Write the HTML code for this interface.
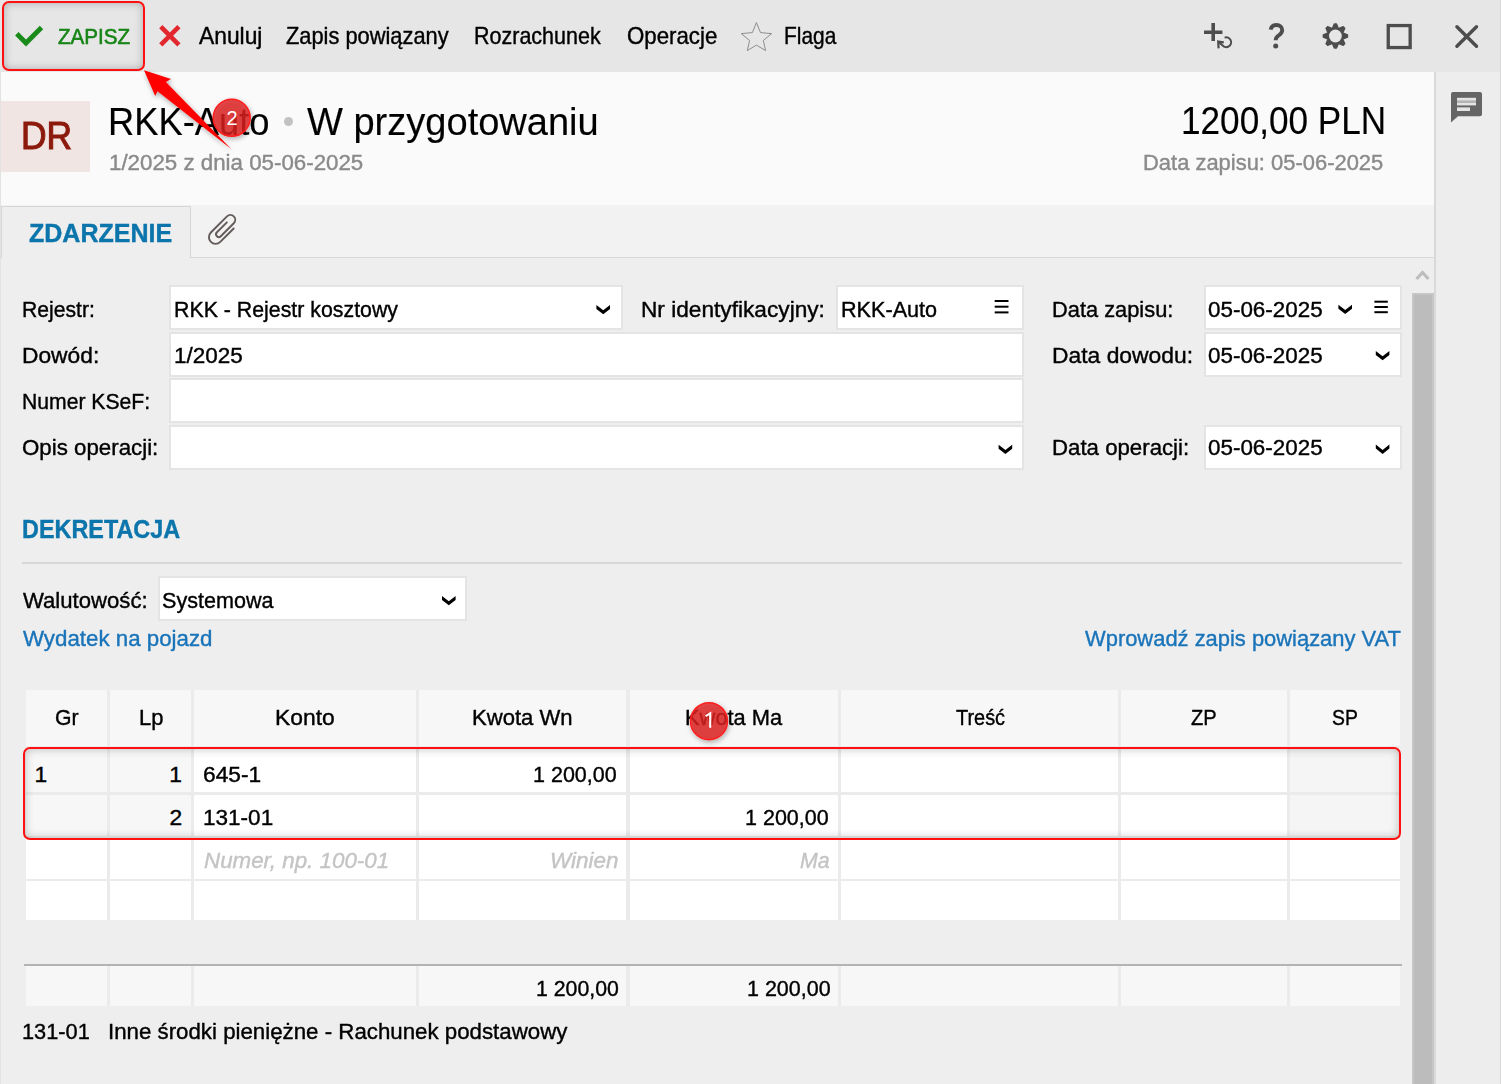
<!DOCTYPE html>
<html><head><meta charset="utf-8"><style>
html,body{margin:0;padding:0;width:1501px;height:1084px;overflow:hidden;background:#eeeeee;}
.b{position:absolute;}
.t{position:absolute;-webkit-text-stroke:0.4px currentColor;font-family:"Liberation Sans",sans-serif;line-height:1;white-space:pre;transform-origin:0 0;}
svg{position:absolute;left:0;top:0;}
</style></head><body>
<div class="b" style="left:0px;top:0px;width:1501px;height:72px;background:#e6e6e6;"></div><div class="b" style="left:0px;top:72px;width:1434px;height:133px;background:#fafafa;"></div><div class="b" style="left:1434px;top:72px;width:67px;height:1012px;background:#ededed;border-left:2px solid #d9d9d9;box-sizing:border-box;"></div><div class="b" style="left:0px;top:205px;width:1434px;height:53px;background:#f2f2f2;border-bottom:1px solid #d8d8d8;box-sizing:border-box;"></div><div class="b" style="left:1px;top:206px;width:190px;height:52px;background:#eeeeee;border:1px solid #d6d6d6;border-bottom:none;box-sizing:border-box;"></div><div class="b" style="left:0px;top:72px;width:1px;height:1012px;background:#e2e2e2;"></div><div class="b" style="left:1500px;top:0px;width:1px;height:1084px;background:#d9d9d9;"></div><div class="b" style="left:1px;top:101px;width:89px;height:71px;background:#f0e5e3;"></div><div class="b" style="left:284px;top:117px;width:9.4px;height:9.4px;border-radius:50%;background:#c2c2c2"></div><div class="b" style="left:169px;top:285px;width:454px;height:45px;background:#fff;border:2px solid #e4e4e4;box-sizing:border-box;"></div><div class="b" style="left:836px;top:285px;width:188px;height:45px;background:#fff;border:2px solid #e4e4e4;box-sizing:border-box;"></div><div class="b" style="left:1204px;top:285px;width:198px;height:45px;background:#fff;border:2px solid #e4e4e4;box-sizing:border-box;"></div><div class="b" style="left:169px;top:332px;width:855px;height:45px;background:#fff;border:2px solid #e4e4e4;box-sizing:border-box;"></div><div class="b" style="left:1204px;top:332px;width:198px;height:45px;background:#fff;border:2px solid #e4e4e4;box-sizing:border-box;"></div><div class="b" style="left:169px;top:378px;width:855px;height:45px;background:#fff;border:2px solid #e4e4e4;box-sizing:border-box;"></div><div class="b" style="left:169px;top:425px;width:855px;height:45px;background:#fff;border:2px solid #e4e4e4;box-sizing:border-box;"></div><div class="b" style="left:1204px;top:425px;width:198px;height:45px;background:#fff;border:2px solid #e4e4e4;box-sizing:border-box;"></div><div class="b" style="left:22px;top:562px;width:1380px;height:2px;background:#d7d7d7;"></div><div class="b" style="left:158px;top:576px;width:309px;height:45px;background:#fff;border:2px solid #e4e4e4;box-sizing:border-box;"></div><div class="b" style="left:26px;top:690px;width:1374px;height:230px;background:#ebebeb;"></div><div class="b" style="left:26px;top:690px;width:81px;height:56px;background:#f7f7f7;"></div><div class="b" style="left:110px;top:690px;width:81px;height:56px;background:#f7f7f7;"></div><div class="b" style="left:194px;top:690px;width:222px;height:56px;background:#f7f7f7;"></div><div class="b" style="left:419px;top:690px;width:207px;height:56px;background:#f7f7f7;"></div><div class="b" style="left:630px;top:690px;width:208px;height:56px;background:#f7f7f7;"></div><div class="b" style="left:841px;top:690px;width:277px;height:56px;background:#f7f7f7;"></div><div class="b" style="left:1121px;top:690px;width:166px;height:56px;background:#f7f7f7;"></div><div class="b" style="left:1290px;top:690px;width:110px;height:56px;background:#f7f7f7;"></div><div class="b" style="left:26px;top:748px;width:81px;height:44px;background:#f7f7f7;"></div><div class="b" style="left:110px;top:748px;width:81px;height:44px;background:#f7f7f7;"></div><div class="b" style="left:194px;top:748px;width:222px;height:44px;background:#ffffff;"></div><div class="b" style="left:419px;top:748px;width:207px;height:44px;background:#ffffff;"></div><div class="b" style="left:630px;top:748px;width:208px;height:44px;background:#ffffff;"></div><div class="b" style="left:841px;top:748px;width:277px;height:44px;background:#ffffff;"></div><div class="b" style="left:1121px;top:748px;width:166px;height:44px;background:#ffffff;"></div><div class="b" style="left:1290px;top:748px;width:110px;height:44px;background:#f5f5f5;"></div><div class="b" style="left:26px;top:795px;width:81px;height:41px;background:#f7f7f7;"></div><div class="b" style="left:110px;top:795px;width:81px;height:41px;background:#f7f7f7;"></div><div class="b" style="left:194px;top:795px;width:222px;height:41px;background:#ffffff;"></div><div class="b" style="left:419px;top:795px;width:207px;height:41px;background:#ffffff;"></div><div class="b" style="left:630px;top:795px;width:208px;height:41px;background:#ffffff;"></div><div class="b" style="left:841px;top:795px;width:277px;height:41px;background:#ffffff;"></div><div class="b" style="left:1121px;top:795px;width:166px;height:41px;background:#ffffff;"></div><div class="b" style="left:1290px;top:795px;width:110px;height:41px;background:#f5f5f5;"></div><div class="b" style="left:26px;top:838px;width:81px;height:41px;background:#ffffff;"></div><div class="b" style="left:110px;top:838px;width:81px;height:41px;background:#ffffff;"></div><div class="b" style="left:194px;top:838px;width:222px;height:41px;background:#ffffff;"></div><div class="b" style="left:419px;top:838px;width:207px;height:41px;background:#ffffff;"></div><div class="b" style="left:630px;top:838px;width:208px;height:41px;background:#ffffff;"></div><div class="b" style="left:841px;top:838px;width:277px;height:41px;background:#ffffff;"></div><div class="b" style="left:1121px;top:838px;width:166px;height:41px;background:#ffffff;"></div><div class="b" style="left:1290px;top:838px;width:110px;height:41px;background:#ffffff;"></div><div class="b" style="left:26px;top:881px;width:81px;height:39px;background:#ffffff;"></div><div class="b" style="left:110px;top:881px;width:81px;height:39px;background:#ffffff;"></div><div class="b" style="left:194px;top:881px;width:222px;height:39px;background:#ffffff;"></div><div class="b" style="left:419px;top:881px;width:207px;height:39px;background:#ffffff;"></div><div class="b" style="left:630px;top:881px;width:208px;height:39px;background:#ffffff;"></div><div class="b" style="left:841px;top:881px;width:277px;height:39px;background:#ffffff;"></div><div class="b" style="left:1121px;top:881px;width:166px;height:39px;background:#ffffff;"></div><div class="b" style="left:1290px;top:881px;width:110px;height:39px;background:#ffffff;"></div><div class="b" style="left:24px;top:964px;width:1378px;height:2px;background:#b3b3b3;"></div><div class="b" style="left:26px;top:966px;width:1374px;height:40px;background:#ebebeb;"></div><div class="b" style="left:26px;top:966px;width:81px;height:40px;background:#f7f7f7;"></div><div class="b" style="left:110px;top:966px;width:81px;height:40px;background:#f7f7f7;"></div><div class="b" style="left:194px;top:966px;width:222px;height:40px;background:#f7f7f7;"></div><div class="b" style="left:419px;top:966px;width:207px;height:40px;background:#f7f7f7;"></div><div class="b" style="left:630px;top:966px;width:208px;height:40px;background:#f7f7f7;"></div><div class="b" style="left:841px;top:966px;width:277px;height:40px;background:#f7f7f7;"></div><div class="b" style="left:1121px;top:966px;width:166px;height:40px;background:#f7f7f7;"></div><div class="b" style="left:1290px;top:966px;width:110px;height:40px;background:#f7f7f7;"></div><div class="b" style="left:1412px;top:293px;width:22px;height:791px;background:#bcbcbc;border:2px solid #c6c6c6;border-bottom:none;box-sizing:border-box;"></div>
<div class="t" style="left:58.30px;top:26.27px;font-size:22.6px;color:#178517;font-weight:400;font-style:normal;transform:scaleX(0.9131);-webkit-text-stroke:0.6px #178517;">ZAPISZ</div>
<div class="t" style="left:198.70px;top:25.36px;font-size:23.2px;color:#000;font-weight:400;font-style:normal;transform:scaleX(0.9841);">Anuluj</div>
<div class="t" style="left:286.00px;top:25.36px;font-size:23.2px;color:#000;font-weight:400;font-style:normal;transform:scaleX(0.9416);">Zapis powiązany</div>
<div class="t" style="left:474.27px;top:25.36px;font-size:23.2px;color:#000;font-weight:400;font-style:normal;transform:scaleX(0.9270);">Rozrachunek</div>
<div class="t" style="left:627.04px;top:25.36px;font-size:23.2px;color:#000;font-weight:400;font-style:normal;transform:scaleX(0.9600);">Operacje</div>
<div class="t" style="left:783.60px;top:25.36px;font-size:23.2px;color:#000;font-weight:400;font-style:normal;transform:scaleX(0.9018);">Flaga</div>
<div class="t" style="left:108.22px;top:101.81px;font-size:39.2px;color:#000;font-weight:400;font-style:normal;transform:scaleX(0.9270);-webkit-text-stroke:0.15px #000;">RKK-Auto</div>
<div class="t" style="left:307.00px;top:101.81px;font-size:39.2px;color:#000;font-weight:400;font-style:normal;transform:scaleX(0.9706);-webkit-text-stroke:0.15px #000;">W przygotowaniu</div>
<div class="t" style="left:109.28px;top:151.74px;font-size:21.8px;color:#8a8a8a;font-weight:400;font-style:normal;transform:scaleX(1.0234);">1/2025 z dnia 05-06-2025</div>
<div class="t" style="left:1180.91px;top:101.41px;font-size:39.2px;color:#000;font-weight:400;font-style:normal;transform:scaleX(0.8968);-webkit-text-stroke:0.15px #000;">1200,00 PLN</div>
<div class="t" style="left:1143.49px;top:151.64px;font-size:21.8px;color:#8a8a8a;font-weight:400;font-style:normal;transform:scaleX(1.0064);">Data zapisu: 05-06-2025</div>
<div class="t" style="left:21.25px;top:116.83px;font-size:38.7px;color:#8c1a0c;font-weight:400;font-style:normal;transform:scaleX(0.9165);-webkit-text-stroke:1.1px #8c1a0c;">DR</div>
<div class="t" style="left:29.40px;top:221.47px;font-size:25.9px;color:#0c75ab;font-weight:700;font-style:normal;transform:scaleX(0.9670);">ZDARZENIE</div>
<div class="t" style="left:21.57px;top:297.50px;font-size:22.8px;color:#000;font-weight:400;font-style:normal;transform:scaleX(0.9277);">Rejestr:</div>
<div class="t" style="left:21.50px;top:343.60px;font-size:22.8px;color:#000;font-weight:400;font-style:normal;transform:scaleX(0.9992);">Dowód:</div>
<div class="t" style="left:21.57px;top:390.30px;font-size:22.8px;color:#000;font-weight:400;font-style:normal;transform:scaleX(0.9282);">Numer KSeF:</div>
<div class="t" style="left:21.52px;top:436.00px;font-size:22.8px;color:#000;font-weight:400;font-style:normal;transform:scaleX(0.9778);">Opis operacji:</div>
<div class="t" style="left:173.86px;top:297.50px;font-size:22.8px;color:#000;font-weight:400;font-style:normal;transform:scaleX(0.9355);">RKK - Rejestr kosztowy</div>
<div class="t" style="left:173.51px;top:343.70px;font-size:22.8px;color:#000;font-weight:400;font-style:normal;transform:scaleX(0.9875);">1/2025</div>
<div class="t" style="left:641.01px;top:297.50px;font-size:22.8px;color:#000;font-weight:400;font-style:normal;transform:scaleX(0.9943);">Nr identyfikacyjny:</div>
<div class="t" style="left:841.05px;top:297.50px;font-size:22.8px;color:#000;font-weight:400;font-style:normal;transform:scaleX(0.9480);">RKK-Auto</div>
<div class="t" style="left:1051.84px;top:297.50px;font-size:22.8px;color:#000;font-weight:400;font-style:normal;transform:scaleX(0.9575);">Data zapisu:</div>
<div class="t" style="left:1208.00px;top:297.50px;font-size:22.8px;color:#000;font-weight:400;font-style:normal;transform:scaleX(0.9833);">05-06-2025</div>
<div class="t" style="left:1051.80px;top:343.60px;font-size:22.8px;color:#000;font-weight:400;font-style:normal;transform:scaleX(1.0026);">Data dowodu:</div>
<div class="t" style="left:1208.00px;top:343.60px;font-size:22.8px;color:#000;font-weight:400;font-style:normal;transform:scaleX(0.9833);">05-06-2025</div>
<div class="t" style="left:1051.92px;top:436.00px;font-size:22.8px;color:#000;font-weight:400;font-style:normal;transform:scaleX(0.9753);">Data operacji:</div>
<div class="t" style="left:1208.00px;top:436.00px;font-size:22.8px;color:#000;font-weight:400;font-style:normal;transform:scaleX(0.9833);">05-06-2025</div>
<div class="t" style="left:21.60px;top:516.67px;font-size:25.9px;color:#0c75ab;font-weight:700;font-style:normal;transform:scaleX(0.9035);">DEKRETACJA</div>
<div class="t" style="left:22.50px;top:588.70px;font-size:22.8px;color:#000;font-weight:400;font-style:normal;transform:scaleX(0.9705);">Walutowość:</div>
<div class="t" style="left:161.85px;top:588.70px;font-size:22.8px;color:#000;font-weight:400;font-style:normal;transform:scaleX(0.9467);">Systemowa</div>
<div class="t" style="left:22.50px;top:627.40px;font-size:22.8px;color:#1a74b9;font-weight:400;font-style:normal;transform:scaleX(0.9782);">Wydatek na pojazd</div>
<div class="t" style="left:1085.00px;top:627.40px;font-size:22.8px;color:#1a74b9;font-weight:400;font-style:normal;transform:scaleX(0.9615);">Wprowadź zapis powiązany VAT</div>
<div class="t" style="left:54.57px;top:706.30px;font-size:22.8px;color:#000;font-weight:400;font-style:normal;transform:scaleX(0.9300);">Gr</div>
<div class="t" style="left:138.74px;top:706.30px;font-size:22.8px;color:#000;font-weight:400;font-style:normal;transform:scaleX(0.9629);">Lp</div>
<div class="t" style="left:275.00px;top:706.30px;font-size:22.8px;color:#000;font-weight:400;font-style:normal;transform:scaleX(1.0018);">Konto</div>
<div class="t" style="left:472.23px;top:706.30px;font-size:22.8px;color:#000;font-weight:400;font-style:normal;transform:scaleX(0.9686);">Kwota Wn</div>
<div class="t" style="left:685.04px;top:706.30px;font-size:22.8px;color:#000;font-weight:400;font-style:normal;transform:scaleX(0.9594);">Kwota Ma</div>
<div class="t" style="left:955.50px;top:706.30px;font-size:22.8px;color:#000;font-weight:400;font-style:normal;transform:scaleX(0.8736);">Treść</div>
<div class="t" style="left:1191.00px;top:706.30px;font-size:22.8px;color:#000;font-weight:400;font-style:normal;transform:scaleX(0.8809);">ZP</div>
<div class="t" style="left:1332.15px;top:706.30px;font-size:22.8px;color:#000;font-weight:400;font-style:normal;transform:scaleX(0.8509);">SP</div>
<div class="t" style="left:34.40px;top:762.70px;font-size:22.8px;color:#000;font-weight:400;font-style:normal;transform:scaleX(1.0000);">1</div>
<div class="t" style="left:169.30px;top:762.70px;font-size:22.8px;color:#000;font-weight:400;font-style:normal;transform:scaleX(1.0000);">1</div>
<div class="t" style="left:202.50px;top:762.70px;font-size:22.8px;color:#000;font-weight:400;font-style:normal;transform:scaleX(0.9978);">645-1</div>
<div class="t" style="left:533.36px;top:762.70px;font-size:22.8px;color:#000;font-weight:400;font-style:normal;transform:scaleX(0.9430);">1 200,00</div>
<div class="t" style="left:169.50px;top:805.70px;font-size:22.8px;color:#000;font-weight:400;font-style:normal;transform:scaleX(1.0000);">2</div>
<div class="t" style="left:202.51px;top:805.70px;font-size:22.8px;color:#000;font-weight:400;font-style:normal;transform:scaleX(0.9884);">131-01</div>
<div class="t" style="left:744.56px;top:805.70px;font-size:22.8px;color:#000;font-weight:400;font-style:normal;transform:scaleX(0.9430);">1 200,00</div>
<div class="t" style="left:203.50px;top:849.00px;font-size:22.8px;color:#c4c4c4;font-weight:400;font-style:italic;transform:scaleX(0.9805);">Numer, np. 100-01</div>
<div class="t" style="left:550.01px;top:849.00px;font-size:22.8px;color:#c4c4c4;font-weight:400;font-style:italic;transform:scaleX(0.9852);">Winien</div>
<div class="t" style="left:800.00px;top:849.00px;font-size:22.8px;color:#c4c4c4;font-weight:400;font-style:italic;transform:scaleX(0.9358);">Ma</div>
<div class="t" style="left:535.57px;top:976.80px;font-size:22.8px;color:#000;font-weight:400;font-style:normal;transform:scaleX(0.9338);">1 200,00</div>
<div class="t" style="left:746.66px;top:976.80px;font-size:22.8px;color:#000;font-weight:400;font-style:normal;transform:scaleX(0.9419);">1 200,00</div>
<div class="t" style="left:22.34px;top:1020.30px;font-size:22.8px;color:#000;font-weight:400;font-style:normal;transform:scaleX(0.9552);">131-01</div>
<div class="t" style="left:108.05px;top:1020.30px;font-size:22.8px;color:#000;font-weight:400;font-style:normal;transform:scaleX(0.9771);">Inne środki pieniężne - Rachunek podstawowy</div>
<div class="b" style="left:1.5px;top:1px;width:143px;height:69.5px;border:2.5px solid #ff1010;border-radius:7px;box-sizing:border-box;box-shadow:inset 0 0 9px rgba(0,0,0,0.26)"></div><div class="b" style="left:22.5px;top:746.8px;width:1378.5px;height:92.8px;border:2.8px solid #ff1010;border-radius:7px;box-sizing:border-box;box-shadow:inset 0 0 10px rgba(0,0,0,0.24)"></div>
<svg width="1501" height="1084" viewBox="0 0 1501 1084">
<defs>
<filter id="sh" x="-50%" y="-50%" width="200%" height="200%"><feGaussianBlur in="SourceAlpha" stdDeviation="2.5"/><feOffset dx="1" dy="2"/><feComponentTransfer><feFuncA type="linear" slope="0.35"/></feComponentTransfer><feMerge><feMergeNode/><feMergeNode in="SourceGraphic"/></feMerge></filter>
</defs>
<!-- check -->
<polyline points="16.8,33.8 26,43 41.5,27.5" fill="none" stroke="#1a8a1a" stroke-width="4.8"/>
<!-- red x -->
<path d="M160.8,26.6 L178.9,44.8 M178.9,26.6 L160.8,44.8" stroke="#e2282e" stroke-width="4.6"/>
<!-- star -->
<polygon points="756.4,22.5 760.5,32.6 771.6,33.6 763.3,40.5 765.6,50.6 756.4,45.1 747.3,50.6 749.6,40.5 741.3,33.6 752.4,32.6" fill="none" stroke="#8e8e8e" stroke-width="1"/>
<!-- plus refresh -->
<rect x="1211.4" y="23" width="3.6" height="18" fill="#4d4d4d"/>
<rect x="1204" y="30.5" width="18.4" height="3.5" fill="#4d4d4d"/>
<path d="M1224.6,37.6 A4.9,4.9 0 1 1 1222.3,45.2 L1219,42.2" fill="none" stroke="#4d4d4d" stroke-width="2"/>
<polyline points="1223.8,42.3 1218.2,41.6 1218.6,48.4" fill="none" stroke="#4d4d4d" stroke-width="2.2"/>
<!-- ? -->
<path d="M1270.6,29.6 C1271.3,26.4 1273.6,25 1276.4,25 C1279.8,25 1282.2,27.2 1282.2,30.2 C1282.2,33.4 1279.8,34.6 1277.8,36.1 C1276.2,37.3 1275.6,38.2 1275.6,40.2" fill="none" stroke="#4d4d4d" stroke-width="3.9"/>
<circle cx="1275.7" cy="46" r="2.5" fill="#4d4d4d"/>
<!-- gear -->
<polygon points="1332.38,28.70 1334.35,23.95 1336.45,23.95 1338.42,28.70 1343.18,26.73 1344.67,28.22 1342.70,32.98 1347.45,34.95 1347.45,37.05 1342.70,39.02 1344.67,43.78 1343.18,45.27 1338.42,43.30 1336.45,48.05 1334.35,48.05 1332.38,43.30 1327.62,45.27 1326.13,43.78 1328.10,39.02 1323.35,37.05 1323.35,34.95 1328.10,32.98 1326.13,28.22 1327.62,26.73" fill="#4d4d4d" stroke="#4d4d4d" stroke-width="1.5" stroke-linejoin="round"/>
<circle cx="1335.4" cy="36.0" r="6.4" fill="#e6e6e6"/>
<!-- square -->
<rect x="1388.25" y="25.55" width="21.9" height="22" fill="none" stroke="#4d4d4d" stroke-width="3.3"/>
<!-- close x -->
<path d="M1456.9,26.7 L1476.5,46.3 M1476.5,26.7 L1456.9,46.3" stroke="#4d4d4d" stroke-width="3.4" stroke-linecap="round"/>
<!-- comment icon -->
<path d="M1453,92 H1480 a2,2 0 0 1 2,2 V114.3 a2,2 0 0 1 -2,2 H1458 L1451,122.6 V94 a2,2 0 0 1 2,-2 Z" fill="#656565"/>
<rect x="1457" y="97.8" width="19" height="7.6" fill="#e4e4e4"/>
<rect x="1457" y="100.4" width="19" height="2.6" fill="#b4b4b4"/>
<rect x="1457" y="107.4" width="13" height="3.6" fill="#e4e4e4"/>
<!-- paperclip -->
<g transform="translate(222,229.1) scale(1.08) translate(-221.9,-228.3) rotate(-45)"><path d="M3.5,325.6 L-14.05,325.6 A6.15,6.15 0 0 1 -14.05,313.3 L7.05,313.3 A4.45,4.45 0 0 1 7.05,322.2 L-9.95,322.2 A2.55,2.55 0 0 1 -9.95,317.1 L3.1,317.1" fill="none" stroke="#645c5a" stroke-width="1.8" stroke-linecap="round"/></g>
<!-- chevrons -->
<polygon points="596.4,305 603.20,310.30 610.00,305 610.00,309.0 603.20,314.30 596.4,309.0" fill="#000"/>
<polygon points="1338.4,304.8 1345.20,310.10 1352.00,304.8 1352.00,308.8 1345.20,314.10 1338.4,308.8" fill="#000"/>
<polygon points="1375.8,351 1382.60,356.30 1389.40,351 1389.40,355.0 1382.60,360.30 1375.8,355.0" fill="#000"/>
<polygon points="998.6,444.8 1005.40,450.10 1012.20,444.8 1012.20,448.8 1005.40,454.10 998.6,448.8" fill="#000"/>
<polygon points="1375.8,444.6 1382.60,449.90 1389.40,444.6 1389.40,448.6 1382.60,453.90 1375.8,448.6" fill="#000"/>
<polygon points="442,596 448.80,601.30 455.60,596 455.60,600.0 448.80,605.30 442,600.0" fill="#000"/>
<!-- hamburger -->
<g fill="#000">
<rect x="994.7" y="300" width="13.8" height="2"/><rect x="994.7" y="305.7" width="13.8" height="2"/><rect x="994.7" y="311.4" width="13.8" height="2"/>
<rect x="1374.4" y="300.7" width="13.4" height="2"/><rect x="1374.4" y="306" width="13.4" height="2"/><rect x="1374.4" y="311.2" width="13.4" height="2"/>
</g>
<!-- scroll up -->
<polyline points="1416.5,279 1422.5,272.5 1428.5,279" fill="none" stroke="#bdbdbd" stroke-width="3.2"/>
<!-- arrow -->
<polygon points="144,70.3 171,79.1 165.9,81.9 231.2,149.1 157.5,91.2 155.2,95.9" fill="#ff0000" filter="url(#sh)"/>
<!-- badges -->
<g filter="url(#sh)">
<circle cx="231.7" cy="117.8" r="18.5" fill="rgba(222,30,32,0.8)" stroke="#ff1d1d" stroke-width="1.5"/>
<circle cx="709" cy="721.2" r="18.5" fill="rgba(222,30,32,0.8)" stroke="#ff1d1d" stroke-width="1.5"/>
</g>
<text x="232" y="124.6" text-anchor="middle" font-family="Liberation Sans" font-size="20" fill="#fff">2</text>
<path d="M705.6,716.2 L710.2,713.4 L710.2,727.7" fill="none" stroke="#fff" stroke-width="2.1"/>
</svg>

</body></html>
